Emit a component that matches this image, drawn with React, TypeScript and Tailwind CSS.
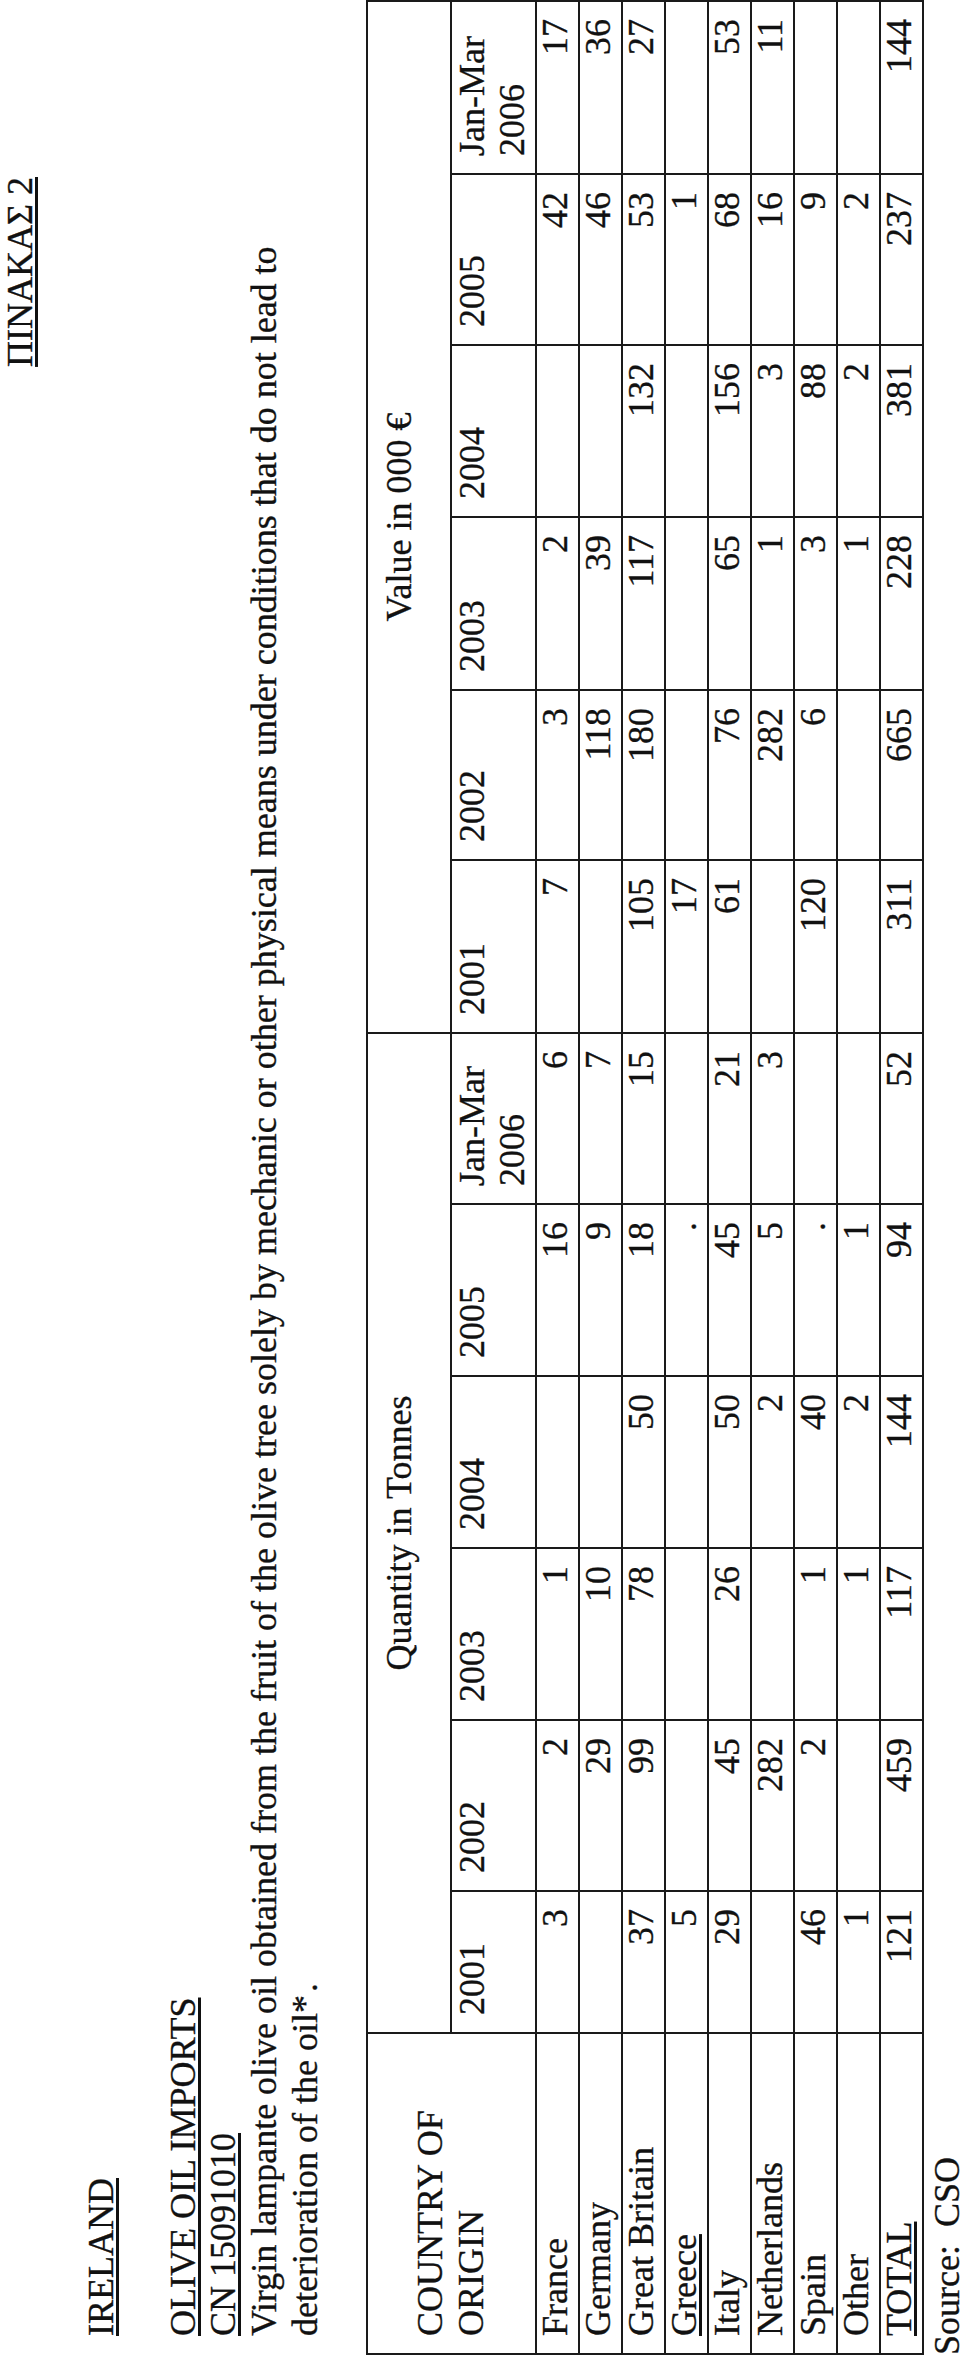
type Row = { name: string; underline?: boolean; q: string[]; v: string[] };

const years = ["2001", "2002", "2003", "2004", "2005"];

const rows: Row[] = [
  { name: "France", q: ["3", "2", "1", "", "16", "6"], v: ["7", "3", "2", "", "42", "17"] },
  { name: "Germany", q: ["", "29", "10", "", "9", "7"], v: ["", "118", "39", "", "46", "36"] },
  { name: "Great Britain", q: ["37", "99", "78", "50", "18", "15"], v: ["105", "180", "117", "132", "53", "27"] },
  { name: "Greece", underline: true, q: ["5", "", "", "", ".", ""], v: ["17", "", "", "", "1", ""] },
  { name: "Italy", q: ["29", "45", "26", "50", "45", "21"], v: ["61", "76", "65", "156", "68", "53"] },
  { name: "Netherlands", q: ["", "282", "", "2", "5", "3"], v: ["", "282", "1", "3", "16", "11"] },
  { name: "Spain", q: ["46", "2", "1", "40", ".", ""], v: ["120", "6", "3", "88", "9", ""] },
  { name: "Other", q: ["1", "", "1", "2", "1", ""], v: ["", "", "1", "2", "2", ""] },
  { name: "TOTAL", underline: true, q: ["121", "459", "117", "144", "94", "52"], v: ["311", "665", "228", "381", "237", "144"] },
];

// column widths measured between grid lines
const colWidths = [321, 142, 171, 172, 172, 172, 171, 173, 170, 173, 172, 171, 173];

const cell = "border-2 border-[#1a1a1a] px-[17px] py-0 align-top";

function YearHeaders() {
  return (
    <>
      {years.map((y) => (
        <td key={y} className={cell}>{y}</td>
      ))}
      <td className={cell}>
        Jan-Mar
        <br />
        2006
      </td>
    </>
  );
}

export default function App() {
  return (
    <div className="h-[2365px] w-[960px] overflow-hidden bg-white">
      {/* page is printed landscape, so lay it out flat and turn it */}
      <div className="h-[960px] w-[2365px] origin-top-left [transform:translateY(2365px)_rotate(-90deg)] font-['Liberation_Serif','Times_New_Roman',serif] text-[36px] leading-[40.7px] text-[#111] [-webkit-text-stroke:0.35px_#111]">
        <div className="ml-[25px] w-[2159px]">
          <p className="-mt-[4px] text-right">
            <span className="underline underline-offset-[3px]">ΠΙΝΑΚΑΣ 2</span>
          </p>
          <p className="mt-[40.7px]">
            <span className="underline underline-offset-[3px]">IRELAND</span>
          </p>
          <p className="mt-[40.7px]">
            <span className="underline underline-offset-[3px]">OLIVE OIL IMPORTS</span>
          </p>
          <p>
            <span className="underline underline-offset-[3px]">CN 15091010</span>
          </p>
          <p className="whitespace-nowrap">
            Virgin lampante olive oil obtained from the fruit of the olive tree solely by mechanic or other physical means under conditions that do not lead to
            <br />
            deterioration of the oil*&#8202;.
          </p>
        </div>

        <table className="ml-[6px] mt-[40px] w-[2353px] table-fixed border-collapse">
          <colgroup>
            {colWidths.map((w, i) => (
              <col key={i} style={{ width: w }} />
            ))}
          </colgroup>
          <tbody>
            <tr className="h-[84px]">
              <td rowSpan={2} className="border-2 border-[#1a1a1a] px-[17px] align-middle">
                COUNTRY OF
                <br />
                ORIGIN
              </td>
              <td colSpan={6} className="border-2 border-[#1a1a1a] pt-[11px] text-center align-top">
                Quantity in Tonnes
              </td>
              <td colSpan={6} className="border-2 border-[#1a1a1a] pt-[11px] text-center align-top">
                Value in 000 €
              </td>
            </tr>
            <tr className="h-[85px]">
              <YearHeaders />
              <YearHeaders />
            </tr>
            {rows.map((r) => (
              <tr key={r.name} className="h-[43px] leading-[37px]">
                <td className={cell}>
                  {r.underline ? <span className="underline underline-offset-[3px]">{r.name}</span> : r.name}
                </td>
                {[...r.q, ...r.v].map((n, i) => (
                  <td key={i} className={`${cell} text-right`}>{n}</td>
                ))}
              </tr>
            ))}
          </tbody>
        </table>

        <p className="ml-[6px] mt-[3px] whitespace-pre">Source:  CSO</p>
      </div>
    </div>
  );
}
